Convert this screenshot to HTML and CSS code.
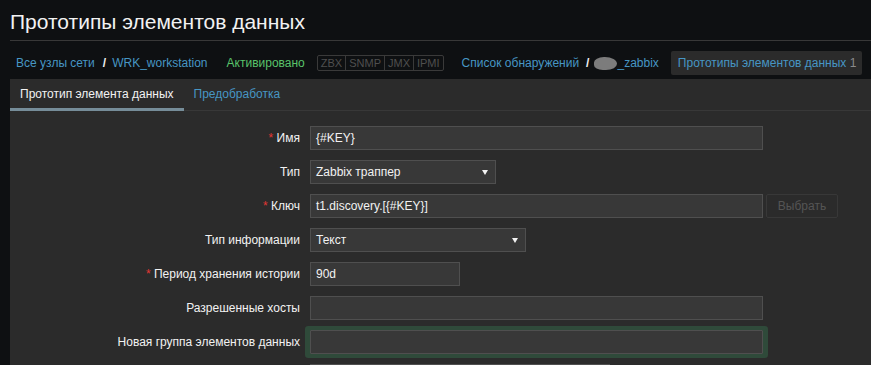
FILE: index.html
```html
<!DOCTYPE html>
<html lang="ru">
<head>
<meta charset="utf-8">
<title>Прототипы элементов данных</title>
<link rel="stylesheet" href="styles.css">
</head>
<body>
<header class="page-header">
  <h1 class="page-title">Прототипы элементов данных</h1>
</header>
<nav class="breadcrumbs">
  <a class="crumb crumb-first" href="#">Все узлы сети</a>
  <span class="sep">/</span>
  <a class="crumb" href="#">WRK_workstation</a>
  <span class="status">Активировано</span>
  <span class="badges"><span class="badge">ZBX</span><span class="badge">SNMP</span><span class="badge">JMX</span><span class="badge">IPMI</span></span>
  <a class="crumb crumb-list" href="#">Список обнаружений</a>
  <span class="sep">/</span>
  <a class="crumb crumb-rule" href="#"><span class="blob"></span>_zabbix</a>
  <span class="crumb-current"><a href="#">Прототипы элементов данных</a> <span class="count">1</span></span>
</nav>
<main class="content">
  <ul class="tabs">
    <li class="tab tab-active">Прототип элемента данных</li>
    <li class="tab"><a href="#">Предобработка</a></li>
  </ul>
  <form class="form">
    <div class="row">
      <label class="label"><span class="req">*</span> Имя</label>
      <div class="field"><div class="input w-wide">{#KEY}</div></div>
    </div>
    <div class="row">
      <label class="label">Тип</label>
      <div class="field"><div class="input select w-type"><span>Zabbix траппер</span><span class="arrow"></span></div></div>
    </div>
    <div class="row">
      <label class="label"><span class="req">*</span> Ключ</label>
      <div class="field"><div class="input w-wide">t1.discovery.[{#KEY}]</div><button type="button" class="btn-disabled">Выбрать</button></div>
    </div>
    <div class="row">
      <label class="label">Тип информации</label>
      <div class="field"><div class="input select w-info"><span>Текст</span><span class="arrow"></span></div></div>
    </div>
    <div class="row">
      <label class="label"><span class="req">*</span> Период хранения истории</label>
      <div class="field"><div class="input w-short">90d</div></div>
    </div>
    <div class="row">
      <label class="label">Разрешенные хосты</label>
      <div class="field"><div class="input w-wide"></div></div>
    </div>
    <div class="row">
      <label class="label">Новая группа элементов данных</label>
      <div class="field"><div class="input w-wide focused"></div></div>
    </div>
    <div class="row row-top">
      <span class="label"></span>
      <div class="field"><div class="input listbox"></div></div>
    </div>
  </form>
</main>
</body>
</html>
```

FILE: styles.css
```css
* { box-sizing: border-box; }
html, body { margin: 0; padding: 0; }
body {
  background: #0e1012;
  color: #f2f2f2;
  font-family: "Liberation Sans", Arial, sans-serif;
  font-size: 12px;
  overflow: hidden;
  height: 365px;
}
a { color: #4796c4; text-decoration: none; }

.page-header {
  margin: 0 0 0 10px;
  padding: 10px 0 6px;
  border-bottom: 1px solid #383838;
}
.page-title {
  margin: 0;
  font-size: 21px;
  line-height: 24px;
  font-weight: normal;
  color: #f2f2f2;
}

.breadcrumbs {
  display: flex;
  align-items: center;
  height: 38px;
  padding: 10px 0 4px 10px;
  line-height: 24px;
  white-space: nowrap;
}
.crumb-first { margin-left: 6px; }
.sep {
  color: #f2f2f2;
  font-weight: bold;
  margin: 0 6px 0 8px;
}
.status { color: #59c36a; margin-left: 19px; }
.badges {
  display: flex;
  margin-left: 12px;
  height: 16px;
  border: 1px solid #3a3a3a;
  border-radius: 2px;
  font-size: 11px;
  line-height: 14px;
  color: #4f4f4f;
}
.badge {
  padding: 0 3px;
  border-left: 1px solid #3a3a3a;
}
.badge:first-child { border-left: none; }
.crumb-list { margin-left: 18px; }
.crumb-list + .sep { margin: 0 5px 0 7px; }
.crumb-rule { display: flex; align-items: center; }
.blob {
  display: inline-block;
  width: 23px;
  height: 13px;
  background: #7c7c7c;
  border-radius: 45% 55% 50% 40%;
}
.crumb-current {
  margin-left: 12px;
  background: #2b2b2b;
  border-radius: 2px;
  padding: 0 6px 0 7px;
  height: 24px;
}
.count { color: #8a8a8a; }

.content {
  margin-left: 10px;
  background: #2b2b2b;
  height: 300px;
}
.tabs {
  list-style: none;
  margin: 0;
  padding: 0;
  display: flex;
  height: 32px;
  border-bottom: 1px solid #383838;
}
.tab {
  height: 32px;
  padding: 0 10px;
  line-height: 30px;
  margin-bottom: -1px;
  border-bottom: 3px solid transparent;
}
.tab-active {
  border-bottom-color: #768d99;
  color: #f2f2f2;
}

.form { padding-top: 15px; }
.row {
  display: grid;
  grid-template-columns: 290px 1fr;
  column-gap: 10px;
  align-items: center;
  margin-bottom: 10px;
}
.row-top { align-items: start; }
.label { text-align: right; color: #f2f2f2; }
.req { color: #e33734; }
.field { display: flex; align-items: center; }
.input {
  height: 24px;
  line-height: 22px;
  padding: 0 5px;
  background: #383838;
  border: 1px solid #4f4f4f;
  color: #f2f2f2;
}
.w-wide { width: 453px; }
.w-type { width: 186px; }
.w-info { width: 216px; }
.w-short { width: 150px; }
.listbox { width: 300px; height: 100px; }
.select {
  display: flex;
  justify-content: space-between;
  align-items: center;
}
.arrow {
  width: 0;
  height: 0;
  border-left: 3px solid transparent;
  border-right: 3px solid transparent;
  border-top: 5px solid #f2f2f2;
  margin-right: 2px;
}
.focused {
  border-radius: 1px;
  box-shadow: -1px 0 0 4px #2f4a3a, 1px 0 0 4px #2f4a3a;
}
.btn-disabled {
  margin-left: 3px;
  height: 24px;
  width: 72px;
  background: #2b2b2b;
  border: 1px solid #383838;
  border-radius: 2px;
  color: #555555;
  font-family: "Liberation Sans", Arial, sans-serif;
  font-size: 12px;
  padding: 0;
}
```
